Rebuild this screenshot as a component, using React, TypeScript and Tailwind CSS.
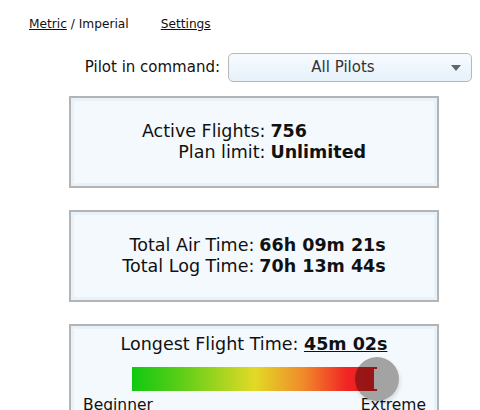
import React from "react";

function StatBox({ rows }: { rows: [string, string][] }) {
  return (
    <div className="ml-[69px] flex h-[92px] w-[370px] items-center justify-center border-2 border-[#b4b4b4] bg-[#f4f9fd] shadow-[inset_0_0_0_3px_#e8f2fb]">
      <table className="text-[17.5px] leading-[21px] text-[#111]">
        <tbody>
          {rows.map(([label, value]) => (
            <tr key={label}>
              <td className="pr-[5px] text-right">{label}</td>
              <td className="text-left font-bold">{value}</td>
            </tr>
          ))}
        </tbody>
      </table>
    </div>
  );
}

export default function App() {
  return (
    <div className="h-[410px] w-[480px] overflow-hidden bg-white font-['DejaVu_Sans',Verdana,sans-serif] text-[#111]">
      <div className="flex gap-[32px] pl-[29px] pt-[16px] text-[12.2px] leading-[16px]">
        <span>
          <span className="underline">Metric</span> / Imperial
        </span>
        <span className="underline">Settings</span>
      </div>

      <div className="mt-[21px] flex items-center">
        <span className="w-[220px] text-right text-[15px]">Pilot in command:</span>
        <div className="relative ml-[8px] flex h-[29px] w-[244px] items-center justify-center rounded-[5px] border border-[#b8b8b8] bg-gradient-to-b from-[#f6fbff] to-[#e6f1fb] pr-[14px] text-[15px] text-[#333]">
          All Pilots
          <span className="absolute right-[10px] top-[11px] h-0 w-0 border-x-[5px] border-t-[6px] border-x-transparent border-t-[#666]" />
        </div>
      </div>

      <div className="mt-[14px]">
        <StatBox rows={[["Active Flights:", "756"], ["Plan limit:", "Unlimited"]]} />
      </div>
      <div className="mt-[22px]">
        <StatBox rows={[["Total Air Time:", "66h 09m 21s"], ["Total Log Time:", "70h 13m 44s"]]} />
      </div>

      <div className="ml-[69px] mt-[22px] h-[120px] w-[370px] border-2 border-[#b4b4b4] bg-[#f4f9fd] shadow-[inset_0_0_0_3px_#e8f2fb]">
        <div className="pt-[8px] text-center text-[17.5px] leading-[20px]">
          Longest Flight Time: <span className="font-bold underline">45m 02s</span>
        </div>
        <div className="relative isolate ml-[61px] mt-[13px] h-[24px] w-[245px] bg-[linear-gradient(to_right,#10c810_0%,#5cce18_20%,#e2da26_50%,#f08a2a_70%,#f02424_88%,#f01e1e_100%)]">
          <span className="absolute right-[0px] top-[2px] h-[20px] w-[3px] bg-white" />
          <span className="absolute right-[-22px] top-[-10px] h-[44px] w-[44px] rounded-full bg-[#a3a3a3] mix-blend-multiply shadow-[1px_3px_4px_rgba(0,0,0,0.12)]" />
        </div>
        <div className="mt-[5px] flex justify-between pl-[12px] pr-[11px] text-[15.5px] leading-[18px]">
          <span>Beginner</span>
          <span>Extreme</span>
        </div>
      </div>
    </div>
  );
}
